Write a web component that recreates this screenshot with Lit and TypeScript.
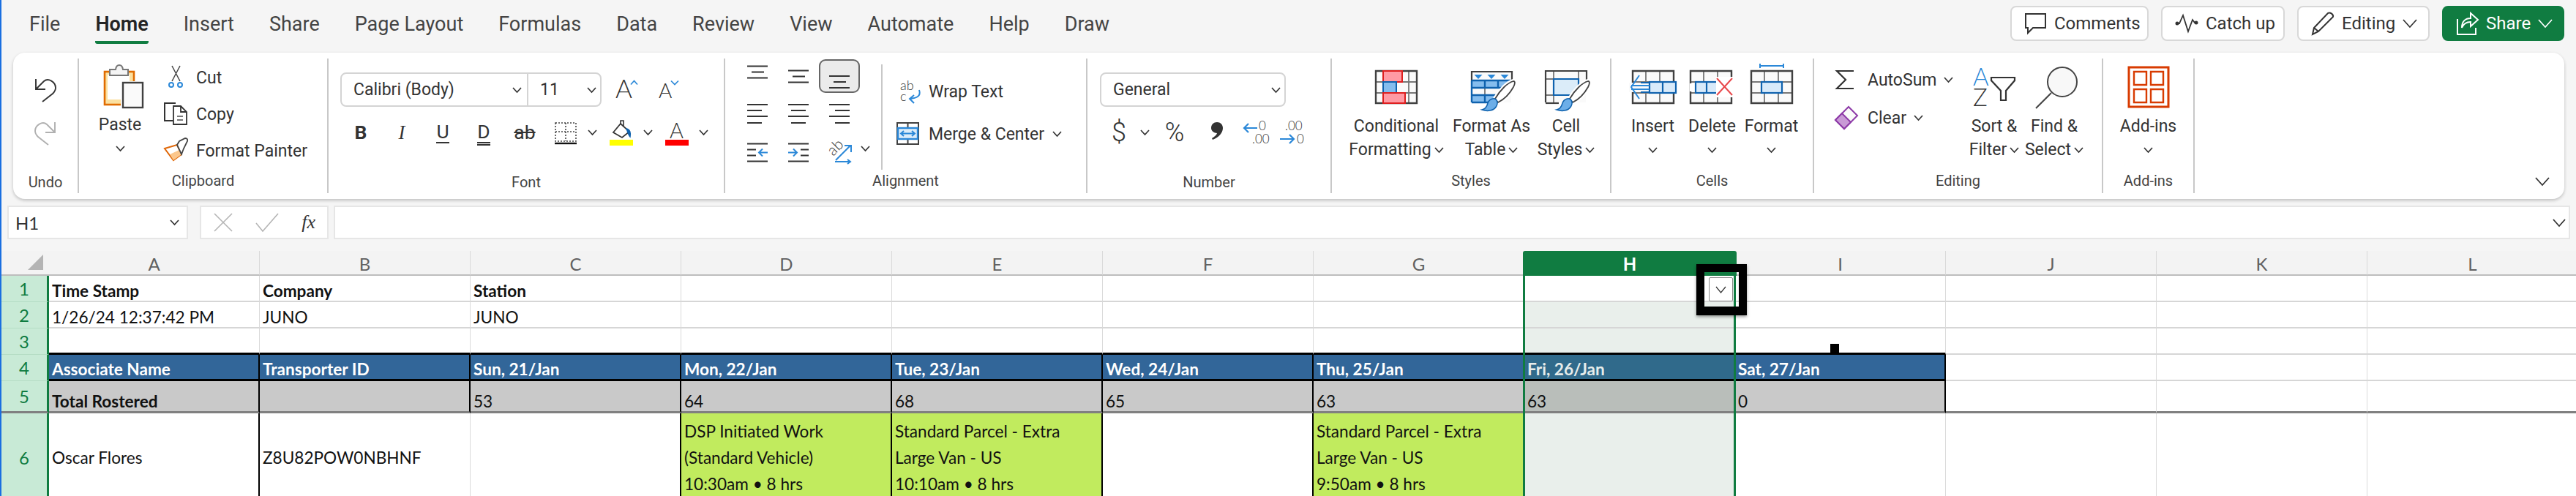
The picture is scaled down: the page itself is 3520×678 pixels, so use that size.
import { LitElement, html, svg, css } from "lit";
import { customElement } from "lit/decorators.js";

const chev = (w = 11, h = 6, c = "#333", sw = 1.7) => html`<svg class="chev" width=${w + 2} height=${h + 2} viewBox="0 0 ${w + 2} ${h + 2}"><path d="M1 1 L${(w + 2) / 2} ${h + 1} L${w + 1} 1" fill="none" stroke=${c} stroke-width=${sw}/></svg>`;

const lines = (rows: number[][], extra: unknown = "") => html`<svg width="32" height="36" viewBox="0 0 32 36"><path d="${rows.map((r) => `M${r[0]} ${r[2]}H${r[1]}`).join("")}" stroke="#333" stroke-width="2" fill="none"/>${extra}</svg>`;

const brush = () => svg`<path d="M37 39C44 27 54 17 62 15C65 15 64 19 62 23C57 32 49 40 41 44Z" fill="#fff" stroke="#fff" stroke-width="6"/><path d="M37 39C44 27 54 17 62 15C65 15 64 19 62 23C57 32 49 40 41 44Z" fill="#fff" stroke="#444" stroke-width="1.800"/><path d="M19 54C24 53 26 49 27 45C29 39 36 37 39 41C42 46 38 54 30 55C26 56 22 55 19 54Z" fill="#6caee8" stroke="#0f62ae" stroke-width="1.500"/>`;

@customElement("app-root")
export class AppRoot extends LitElement {
  static styles = css`
    :host { display: block; width: 3520px; height: 678px; overflow: hidden; background: #f5f5f5; border-left: 2px solid #1a6fe0; box-sizing: border-box; font-family: "Roboto", "Noto Sans", sans-serif; color: #333; }
    svg { display: block; flex: none; overflow: visible; }
    .top { display: flex; justify-content: space-between; height: 72px; padding-right: 16px; }
    .tabs { display: flex; gap: 48px; padding-left: 38px; }
    .tab { height: 60px; padding-top: 10px; line-height: 46px; font-size: 27px; color: #444; box-sizing: border-box; border-bottom: 4px solid transparent; }
    .tab.on { color: #242424; font-weight: 600; border-bottom-color: #107c41; border-radius: 0 0 3px 3px; }
    .acts { display: flex; gap: 17px; padding-top: 8px; }
    .act { height: 48px; box-sizing: border-box; border: 2px solid #d8d8d8; border-radius: 8px; background: #fff; display: flex; align-items: center; gap: 10px; font-size: 24px; color: #333; }
    .a1 { width: 189px; padding-left: 18px; }
    .a2 { width: 169px; padding-left: 17px; }
    .a3 { width: 181px; padding-left: 17px; }
    .a4 { width: 167px; padding-left: 18px; background: #107c41; border-color: #107c41; color: #fff; }
    .ribbon { display: flex; height: 200px; margin: 0 16px; box-sizing: border-box; padding: 8px 0; background: #fff; border-radius: 16px; box-shadow: 0 2px 4px rgba(0,0,0,.22); font-size: 23px; }
    .g { position: relative; box-sizing: border-box; border-right: 2px solid #c8c8c8; height: 184px; flex: none; display: flex; flex-direction: column; }
    .body { height: 152px; display: flex; }
    .lab { height: 32px; line-height: 30px; text-align: center; font-size: 20px; color: #444; }
    .g1 { width: 90px; } .g2 { width: 341px; } .g3 { width: 542px; } .g4 { width: 495px; } .g5 { width: 334px; } .g6 { width: 382px; } .g7 { width: 277px; } .g8 { width: 395px; } .g9 { width: 125px; }
    .undo { flex-direction: column; align-items: center; gap: 25px; padding-top: 27px; }
    .pastecol { margin-left: 24px; width: 64px; display: flex; flex-direction: column; align-items: center; padding-top: 6px; }
    .pastecol .t { line-height: 30px; margin-top: 8px; }
    .pastecol .chev { margin-top: 13px; }
    .clip { margin-left: 28px; display: flex; flex-direction: column; padding-top: 1px; }
    .rowi { height: 52px; display: flex; align-items: center; }
    .ic { width: 44px; display: flex; flex: none; }
    .fontcol { padding: 19px 0 0 16px; display: flex; flex-direction: column; }
    .f1 { display: flex; align-items: center; height: 47px; }
    .dd { box-sizing: border-box; height: 47px; border: 2px solid #d4d4d4; border-radius: 8px; display: flex; align-items: center; font-size: 23px; }
    .dd1 { width: 357px; }
    .ddn { width: 255px; border-right: 2px solid #d4d4d4; height: 100%; display: flex; align-items: center; justify-content: space-between; padding: 0 7px 0 16px; box-sizing: border-box; }
    .dds { flex: 1; display: flex; align-items: center; justify-content: space-between; padding: 0 5px 0 16px; }
    .grow { margin-left: 19px; display: flex; gap: 22px; }
    .f2 { display: flex; align-items: center; height: 50px; margin-top: 10px; }
    .b { width: 56px; text-align: center; font-size: 26.500px; color: #333; line-height: 40px; display: flex; justify-content: center; flex: none; }
    .b span { display: block; }
    .m4 { margin-left: 4px; }
    .bold { font-weight: 700; color: #333; }
    .ital { font-style: italic; font-family: "Liberation Serif", serif; }
    .und { border-bottom: 2px solid #333; line-height: 28px; }
    .dbl { border-bottom: 5px double #333; line-height: 28px; padding-top: 2px; }
    .strike { text-decoration: line-through; }
    .cv { width: 16px; display: flex; justify-content: center; flex: none; }
    .alg { display: grid; grid-template-columns: repeat(3, 56px); grid-template-rows: 47px 52px 47px; padding: 0 0 0 16px; }
    .alc { display: flex; align-items: center; justify-content: center; box-sizing: border-box; }
    .alc.on { background: #ebebeb; border: 2px solid #666; border-radius: 9px; height: 46px; margin-top: 1px; }
    .alc.last { justify-content: flex-start; padding-left: 12px; gap: 11px; }
    .wrap { margin: 8px 0 0 29px; height: 136px; border-left: 2px solid #c8c8c8; padding: 8px 0 0 20px; display: flex; flex-direction: column; }
    .wrow { height: 58px; display: flex; align-items: center; gap: 11px; }
    .numcol { padding: 19px 0 0 17px; display: flex; flex-direction: column; }
    .dd2 { width: 254px; justify-content: space-between; padding: 0 5px 0 16px; }
    .n2 { display: flex; align-items: center; height: 50px; margin-top: 10px; font-size: 36px; font-weight: 300; color: #333; }
    .n2 > div { display: flex; justify-content: center; flex: none; }
    .nd { width: 52px; } .nc { width: 18px; } .np { width: 64px; } .nm { width: 52px; } .ni { width: 54px; } .nj { width: 46px; }
    .cols { padding-left: 16px; }
    .col { display: flex; flex-direction: column; align-items: center; flex: none; }
    .ico { height: 77px; display: flex; align-items: flex-start; padding-top: 16px; box-sizing: border-box; }
    .up10 { margin-top: -10px; } .up8 { margin-top: -8px; } .up7 { margin-top: -7px; } .up6 { margin-top: -6px; } .up4 { margin-top: -4px; }
    .ln { height: 32px; line-height: 32px; display: flex; align-items: center; gap: 4px; white-space: nowrap; }
    .c1 { width: 144px; } .c2 { width: 116px; } .c3 { width: 88px; } .c4 { width: 81px; } .c5 { width: 82px; } .c6 { width: 123px; }
    .edit { padding-left: 28px; }
    .edl { width: 177px; padding-top: 3px; }
    .edl .rowi { gap: 0; }
    .edl .ic { width: 45px; }
    .edl .chev { margin-left: 10px; }
    .coll { flex: 1; display: flex; justify-content: flex-end; align-items: flex-end; padding: 0 20px 10px 0; }
    .fbar { display: flex; gap: 16px; padding: 9px 8px 16px; height: 71px; box-sizing: border-box; }
    .box { background: #fff; border: 2px solid #e6e6e6; box-sizing: border-box; height: 46px; display: flex; align-items: center; font-size: 24px; }
    .nm-box { width: 247px; justify-content: space-between; padding: 0 10px 0 9px; font-family: Lato, sans-serif; }
    .fn { width: 176px; margin-right: -9px; justify-content: space-between; padding: 0 16px 0 17px; }
    .fx { font-family: "Liberation Serif", serif; font-style: italic; font-size: 26px; }
    .fi { flex: 1; justify-content: flex-end; padding-right: 4px; }
    .sheet { position: relative; display: grid; grid-template-columns: 65px repeat(12, 288px); grid-template-rows: 34px 36px 36px 36px 36px 44px 122px; font-family: Lato, sans-serif; font-size: 22.600px; color: #111; }
    .corner { background: #f3f3f3; border-bottom: 2px solid #bdbdbd; }
    .ch { background: #f3f3f3; border-right: 1px solid #d9d9d9; border-bottom: 2px solid #bdbdbd; text-align: center; line-height: 36px; color: #616161; font-size: 24px; box-sizing: border-box; }
    .ch.on { background: #107c41; color: #fff; font-weight: 700; margin: 0 -2px; border: 0; border-radius: 3px 3px 0 0; position: relative; z-index: 1; }
    .rh { background: #c8ead6; color: #107c41; border-right: 3px solid #107c41; border-bottom: 1px solid #b4dcc4; text-align: center; font-size: 24px; display: flex; align-items: center; justify-content: center; box-sizing: border-box; }
    .c { box-sizing: border-box; background: #fff; border-right: 1px solid #dadada; border-bottom: 2px solid #d6d6d6; padding: 0 4px; display: flex; align-items: flex-end; white-space: nowrap; line-height: 27px; }
    .bb { border-bottom: 3px solid #000; }
    .hd { background: #326699; color: #fff; font-weight: 700; border-right: 2px solid #000; border-bottom: 3px solid #000; }
    .tot { background: #c9c9c9; border-right: 2px solid #000; padding-bottom: 0; }
    .gb { border-bottom: 3px solid #808080; }
    .br { border-right: 2px solid #000; }
    .gr { background: #c1eb5e; white-space: normal; align-items: flex-start; padding-top: 7px; line-height: 36px; }
    .mid { align-items: center; }
    .b7 { font-weight: 700; }
    .sel { background: #e9efeb; }
    .sel.first { background: #fff; }
    .sel.hd { background: #306a8b; color: #e6ecea; }
    .sel.tot { background: #b9beba; }
    .selL, .selR { position: absolute; top: 34px; bottom: 0; width: 3px; background: #107c41; }
    .selL { left: 2079px; } .selR { left: 2367px; }
    .filter { position: absolute; left: 2316px; top: 18px; width: 69px; height: 70px; box-sizing: border-box; border: solid #000; border-width: 11px 11px 12px; box-shadow: 0 2px 4px rgba(0,0,0,.4); z-index: 3; }
    .fbtn { position: absolute; left: 6px; top: 7px; width: 33px; height: 33px; box-sizing: border-box; background: #fff; border: 1px solid #8a8a8a; border-radius: 2px; display: flex; align-items: center; justify-content: center; }
    .dot { position: absolute; left: 2499px; top: 127px; width: 12px; height: 12px; background: #000; z-index: 3; }
    .thin { font-family: Lato, sans-serif; font-weight: 300; fill: #333; }
    .blue { fill: #2b88d8; }
  `;

  private sheet() {
    const cols = "ABCDEFGHIJKL".split("");
    const data: Record<string, string[]> = {
      1: ["Time Stamp", "Company", "Station"],
      2: ["1/26/24 12:37:42 PM", "JUNO", "JUNO"],
      3: [],
      4: ["Associate Name", "Transporter ID", "Sun, 21/Jan", "Mon, 22/Jan", "Tue, 23/Jan", "Wed, 24/Jan", "Thu, 25/Jan", "Fri, 26/Jan", "Sat, 27/Jan"],
      5: ["Total Rostered", "", "53", "64", "68", "65", "63", "63", "0"],
      6: ["Oscar Flores", "Z8U82POW0NBHNF"],
    };
    const six: Record<number, string[]> = {
      3: ["DSP Initiated Work", "(Standard Vehicle)", "10:30am • 8 hrs"],
      4: ["Standard Parcel - Extra", "Large Van - US", "10:10am • 8 hrs"],
      6: ["Standard Parcel - Extra", "Large Van - US", "9:50am • 8 hrs"],
    };
    const cellClass = (r: number, i: number) => {
      const k = ["c"];
      if (r === 3 && i <= 8) k.push("bb");
      if (r === 4 && i <= 8) k.push("hd");
      if (r === 5 && i <= 8) k.push("tot");
      if (r === 5) k.push("gb");
      if (r === 6 && [0, 2, 3, 4, 5].includes(i)) k.push("br");
      if (r === 6 && i in six) k.push("gr");
      if (r === 6 && i < 2) k.push("mid");
      if (r === 1 || (r === 5 && i === 0)) k.push("b7");
      if (i === 7) k.push("sel");
      if (i === 7 && r === 1) k.push("first");
      return k.join(" ");
    };
    return html`<div class="sheet">
      <div class="corner"><svg width="65" height="32" viewBox="0 0 65 32"><path d="M36 26 L57 26 L57 5Z" fill="#b4b4b4"/></svg></div>
      ${cols.map((c) => html`<div class="ch ${c === "H" ? "on" : ""}">${c}</div>`)}
      ${[1, 2, 3, 4, 5, 6].map(
        (r) => html`<div class="rh ${r === 5 ? "gb" : ""}">${r}</div>
          ${cols.map((_, i) => html`<div class=${cellClass(r, i)}>${r === 6 && six[i] ? html`<div>${six[i].map((l) => html`<div>${l}</div>`)}</div>` : data[r][i] ?? ""}</div>`)}`
      )}
      <div class="selL"></div><div class="selR"></div>
      <div class="filter"><div class="fbtn">${chev(13, 8, "#333", 1.2)}</div></div>
      <div class="dot"></div>
    </div>`;
  }

  private gridIcon(kind: string) {
    const frame = svg`<path d="M2 2H56V44H2Z" fill="#fafafa"/><path d="M2 16H56 M2 31H56 M19 2V44 M38 2V44" fill="none" stroke="#777" stroke-width="1.800"/><path d="M1 1H57V45H1Z" fill="none" stroke="#404040" stroke-width="2.400"/>`;
    if (kind === "cf")
      return html`<svg width="58" height="46" viewBox="0 0 58 46"><path d="M2 2H56V44H2Z" fill="#fafafa"/><path d="M2 16H56 M2 31H56 M46 2V44" fill="none" stroke="#777" stroke-width="1.800"/><path d="M1 1H57V45H1Z" fill="none" stroke="#404040" stroke-width="2.400"/><rect x="11" y="1" width="26" height="15" fill="#ff9aa4" stroke="#de1f1f" stroke-width="2"/><rect x="11" y="16" width="18" height="15" fill="#85bdee" stroke="#0f62ae" stroke-width="2"/><rect x="11" y="31" width="30" height="14" fill="#ff9aa4" stroke="#de1f1f" stroke-width="2"/></svg>`;
    if (kind === "fat")
      return html`<svg width="64" height="56" viewBox="0 0 64 56"><path d="M5 2H59V44H5Z" fill="#fafafa"/><path d="M5 14V2H60V16" fill="none" stroke="#404040" stroke-width="2.200"/><path d="M8.500 6h11l-5.500 6Z M26.500 6h11l-5.500 6Z M44.500 6h11l-5.500 6Z" fill="#2b88d8"/><rect x="5" y="14" width="53" height="10" fill="#85bdee"/><rect x="5" y="34" width="30" height="10" fill="#85bdee"/><path d="M23 24V34" stroke="#777" stroke-width="1.800"/><path d="M5 14H58 M5 24H52 M5 34H45 M5 44H34 M5 14V44 M23 14V24 M41 14V24 M23 34V44" fill="none" stroke="#0f62ae" stroke-width="2.400"/>${brush()}</svg>`;
    if (kind === "cs")
      return html`<svg width="64" height="56" viewBox="0 0 64 56"><path d="M5 2H59V44H5Z" fill="#fafafa"/><path d="M5 12H15 M5 34H15 M15 2V44 M49 2V12" fill="none" stroke="#777" stroke-width="1.800"/><path d="M4 44V1H60V18" fill="none" stroke="#404040" stroke-width="2.200"/><path d="M4 45H22" stroke="#404040" stroke-width="2.200"/><path d="M15 12H49V34H15Z" fill="#dbecf9" stroke="#0f62ae" stroke-width="2.200"/>${brush()}</svg>`;
    if (kind === "ins")
      return html`<svg width="66" height="46" viewBox="0 0 66 46"><g transform="translate(4 0)">${frame}</g><rect x="0" y="17" width="28" height="13" fill="#fafafa"/><rect x="28" y="16" width="36" height="15" fill="#d8eafa" stroke="#0f62ae" stroke-width="2.200"/><path d="M46 16V31" stroke="#0f62ae" stroke-width="2.200"/><path d="M16 17H28 M16 30H28" stroke="#0f62ae" stroke-width="2.200"/><path d="M14 7L3 23L14 39 M3 21H28 M3 26H28" fill="none" stroke="#2b88d8" stroke-width="2"/></svg>`;
    if (kind === "del")
      return html`<svg width="62" height="46" viewBox="0 0 62 46">${frame}<rect x="0" y="18" width="8" height="11" fill="#fff"/><rect x="8" y="16" width="30" height="15" fill="#d8eafa" stroke="#0f62ae" stroke-width="2.200"/><path d="M23 16V31" stroke="#0f62ae" stroke-width="2.200"/><rect x="36" y="9" width="24" height="28" fill="#fff"/><path d="M37 11L58 34M58 11L37 34" stroke="#e8474a" stroke-width="2" fill="none"/></svg>`;
    return html`<svg class="up10" width="60" height="56" viewBox="0 0 60 56"><g transform="translate(1 10)">${frame}<rect x="15" y="16" width="28" height="15" fill="#d8eafa" stroke="#0f62ae" stroke-width="2.200"/></g><path d="M14 1V7 M14 4H46 M46 1V7" stroke="#2b88d8" stroke-width="2"/></svg>`;
  }

  render() {
    return html`
      <div class="top">
        <div class="tabs">
          ${["File", "Home", "Insert", "Share", "Page Layout", "Formulas", "Data", "Review", "View", "Automate", "Help", "Draw"].map(
            (t) => html`<div class="tab ${t === "Home" ? "on" : ""}">${t}</div>`
          )}
        </div>
        <div class="acts">
          <div class="act a1"><svg width="30" height="30" viewBox="0 0 30 30"><path d="M1 2H28V21H11L4 28V21H1Z" fill="none" stroke="#333" stroke-width="2"/></svg>Comments</div>
          <div class="act a2"><svg width="32" height="26" viewBox="0 0 32 26"><path d="M1 13H6L11 2L18 24L24 8L27 12H31" fill="none" stroke="#333" stroke-width="1.800"/><circle cx="3" cy="13" r="2.500" fill="#333"/><circle cx="29" cy="12" r="2.500" fill="#333"/></svg>Catch up</div>
          <div class="act a3"><svg width="32" height="32" viewBox="0 0 32 32"><path d="M2 31L4 22L23 2C26 0 31 4 30 7L10 27Z M4 22L10 27" fill="none" stroke="#333" stroke-width="2"/></svg>Editing${chev(18, 10, "#333", 1.7)}</div>
          <div class="act a4"><svg width="30" height="32" viewBox="0 0 30 32"><path d="M1 10V31H26V22" fill="none" stroke="#fff" stroke-width="2"/><path d="M7 22C7 13 12 9 19 9V2L29 11L19 20V14C13 14 9 17 7 22Z" fill="none" stroke="#fff" stroke-width="2"/></svg>Share${chev(18, 10, "#fff", 1.7)}</div>
        </div>
      </div>

      <div class="ribbon">
        <section class="g g1">
          <div class="body undo">
            <svg width="32" height="34" viewBox="0 0 32 34"><path d="M3 1V15H16 M3 15L14 4C20 -1 30 5 30 13C30 17 28 19 26 21L12 32" fill="none" stroke="#333" stroke-width="1.900"/></svg>
            <svg width="32" height="34" viewBox="0 0 32 34"><path d="M29 1V15H16 M29 15L18 4C12 -1 2 5 2 13C2 17 4 19 6 21L20 32" fill="none" stroke="#b0b0b0" stroke-width="1.900"/></svg>
          </div>
          <div class="lab">Undo</div>
        </section>

        <section class="g g2">
          <div class="body">
            <div class="pastecol">
              <svg width="64" height="62" viewBox="0 0 64 62"><rect x="11" y="12" width="40" height="45" fill="#fbe0a0" stroke="#e06c00" stroke-width="2.600"/><rect x="15" y="16" width="30" height="34" fill="#fff"/><path d="M18 17V9H26C27 1 35 1 36 9H43V17Z" fill="#f5f5f5" stroke="#777" stroke-width="2"/><rect x="33" y="25" width="33" height="38" fill="#fff"/><rect x="36" y="27" width="27" height="34" fill="#fafafa" stroke="#404040" stroke-width="2.400"/></svg>
              <div class="t">Paste</div>
              ${chev()}
            </div>
            <div class="clip">
              <div class="rowi"><div class="ic"><svg width="32" height="32" viewBox="0 0 32 32"><path d="M11 0L22 21 M22 0L11 21" stroke="#444" stroke-width="1.500" fill="none"/><circle cx="10" cy="26" r="3" fill="none" stroke="#2b88d8" stroke-width="2"/><circle cx="22" cy="26" r="3" fill="none" stroke="#2b88d8" stroke-width="2"/></svg></div>Cut</div>
              <div class="rowi"><div class="ic"><svg width="32" height="32" viewBox="0 0 32 32"><path d="M16 1H1V25H12" fill="none" stroke="#333" stroke-width="2"/><path d="M13 5H23L31 13V30H13Z M23 5V13H31" fill="#fff" stroke="#333" stroke-width="1.800"/><path d="M18 19H26 M18 24H26" stroke="#777" stroke-width="1.800"/></svg></div>Copy</div>
              <div class="rowi"><div class="ic"><svg width="32" height="36" viewBox="0 0 32 36"><path d="M1 14L18 9L24 22L13 30Z" fill="#fff" stroke="#e0690b" stroke-width="2"/><path d="M8 22L21 16L24 22L13 30Z" fill="#fbc78d"/><path d="M18 9L21 4L29 0Q33 0 32 4L27 14L24 22Z" fill="#fff" stroke="#444" stroke-width="1.800"/></svg></div>Format Painter</div>
            </div>
          </div>
          <div class="lab">Clipboard</div>
        </section>

        <section class="g g3">
          <div class="body fontcol">
            <div class="f1">
              <div class="dd dd1"><div class="ddn">Calibri (Body)${chev()}</div><div class="dds">11${chev()}</div></div>
              <div class="grow">
                <svg width="34" height="36" viewBox="0 0 34 36"><text x="0" y="28.500" font-size="35" class="thin">A</text><path d="M21 10.500L25.500 5.500L30 10.500" fill="none" stroke="#2b88d8" stroke-width="1.700"/></svg>
                <svg width="34" height="36" viewBox="0 0 34 36"><text x="3" y="28.500" font-size="28" class="thin">A</text><path d="M20 5.500L25 10.500L30 5.500" fill="none" stroke="#2b88d8" stroke-width="1.700"/></svg>
              </div>
            </div>
            <div class="f2">
              <div class="b bold"><span>B</span></div>
              <div class="b ital"><span>I</span></div>
              <div class="b"><span class="und">U</span></div>
              <div class="b"><span class="dbl">D</span></div>
              <div class="b"><span class="strike">ab</span></div>
              <div class="b"><svg width="32" height="32" viewBox="0 0 32 32"><path d="M2 3H30V28H2Z M16 3V28 M2 15H30" fill="none" stroke="#444" stroke-width="1.600" stroke-dasharray="2 2"/><path d="M1 31H31" stroke="#111" stroke-width="2.400"/></svg></div>
              <div class="cv">${chev()}</div>
              <div class="b m4"><svg width="32" height="36" viewBox="0 0 32 36"><path d="M5 18L15 6L27 17L17 25Z" fill="#fff" stroke="#333" stroke-width="1.800"/><path d="M15 6V2H19V10" fill="none" stroke="#333" stroke-width="1.600"/><path d="M23 13C28 14 29 19 28 24C26 22 25 18 23 13Z" fill="#0f62ae" stroke="#0f62ae" stroke-width="1.500"/><rect y="28" width="32" height="8" x="0" fill="#ffff00"/></svg></div>
              <div class="cv">${chev()}</div>
              <div class="b m4"><svg width="32" height="36" viewBox="0 0 32 36"><text x="6" y="26" font-size="29" class="thin">A</text><rect y="28" width="32" height="8" fill="#f00"/></svg></div>
              <div class="cv">${chev()}</div>
            </div>
          </div>
          <div class="lab">Font</div>
        </section>

        <section class="g g4">
          <div class="body">
            <div class="alg">
              <div class="alc">${lines([[2, 30, 4.5], [8, 25, 12.5], [2, 30, 20.5]])}</div>
              <div class="alc">${lines([[2, 30, 10.5], [8, 25, 18.5], [2, 30, 26.5]])}</div>
              <div class="alc on">${lines([[2, 30, 18], [8, 25, 26], [2, 30, 34]])}</div>
              <div class="alc">${lines([[2, 30, 8], [2, 22, 16], [2, 30, 24], [2, 22, 33]])}</div>
              <div class="alc">${lines([[2, 30, 8], [6, 26, 16], [2, 30, 24], [6, 26, 33]])}</div>
              <div class="alc">${lines([[2, 30, 8], [10, 30, 16], [2, 30, 24], [10, 30, 33]])}</div>
              <div class="alc">${lines([[2, 30, 11.5], [2, 14, 19.5], [2, 14, 27.5], [2, 30, 35.5]], svg`<path d="M30 23.500H18 M23 18.500L18 23.500L23 28.500" stroke="#2b88d8" stroke-width="2" fill="none"/>`)}</div>
              <div class="alc">${lines([[2, 30, 11.5], [19, 30, 19.5], [19, 30, 27.5], [2, 30, 35.5]], svg`<path d="M2 23.500H14 M9 18.500L14 23.500L9 28.500" stroke="#2b88d8" stroke-width="2" fill="none"/>`)}</div>
              <div class="alc last"><svg width="34" height="38" viewBox="0 0 34 38"><text x="11" y="24" font-size="21" text-anchor="middle" class="thin" transform="rotate(-45 11 18)">ab</text><path d="M11 35L31 15 M23 15H32V24 M10 37H30 M27 34L31 37L27 40" fill="none" stroke="#2b88d8" stroke-width="2"/></svg>${chev()}</div>
            </div>
            <div class="wrap">
              <div class="wrow"><svg width="32" height="34" viewBox="0 0 32 34"><text x="4" y="15" font-size="18" class="thin">ab</text><text x="4" y="30" font-size="18" class="thin">c</text><path d="M30 15C33 24 26 26 17 27 M23 22L17 27L23 33" fill="none" stroke="#2b88d8" stroke-width="2"/></svg>Wrap Text</div>
              <div class="wrow"><svg width="32" height="32" viewBox="0 0 32 32"><path d="M0 1H29V30H0Z M14.500 1V8 M14.500 23V30" fill="none" stroke="#404040" stroke-width="2"/><rect x="1" y="8" width="27" height="15" fill="#dbecf9" stroke="#2b88d8" stroke-width="2.400"/><path d="M5 15.500H24 M9 12L5 15.500L9 19 M20 12L24 15.500L20 19" fill="none" stroke="#2b88d8" stroke-width="2"/></svg>Merge &amp; Center${chev()}</div>
            </div>
          </div>
          <div class="lab">Alignment</div>
        </section>

        <section class="g g5">
          <div class="body numcol">
            <div class="dd dd2">General${chev()}</div>
            <div class="n2">
              <div class="nd">$</div>
              <div class="nc">${chev()}</div>
              <div class="np">%</div>
              <div class="nm"><svg width="16" height="24" viewBox="0 0 16 24" class="up4"><path d="M8 0C12.500 0 16 3 16 8C16 15 10 21 2 24L1 22C5 20 7.500 17 8 15C4 15 0 12 0 8C0 3 3.500 0 8 0Z" fill="#333"/></svg></div>
              <div class="ni"><svg width="36" height="34" viewBox="0 0 36 34"><text x="22" y="14" font-size="17" class="thin">0</text><text x="13" y="32" font-size="17" class="thin">.00</text><path d="M20 11H2 M8 5L2 11L8 17" fill="none" stroke="#2b88d8" stroke-width="2.200"/></svg></div>
              <div class="nj"><svg width="36" height="34" viewBox="0 0 36 34"><text x="8" y="14" font-size="17" class="thin">.00</text><text x="24" y="32" font-size="17" class="thin">0</text><path d="M1 26H20 M14 20L20 26L14 32" fill="none" stroke="#2b88d8" stroke-width="2.200"/></svg></div>
            </div>
          </div>
          <div class="lab">Number</div>
        </section>

        <section class="g g6">
          <div class="body cols">
            <div class="col c1"><div class="ico">${this.gridIcon("cf")}</div><div class="ln">Conditional</div><div class="ln">Formatting${chev()}</div></div>
            <div class="col c2"><div class="ico">${this.gridIcon("fat")}</div><div class="ln">Format As</div><div class="ln">Table${chev()}</div></div>
            <div class="col c3"><div class="ico">${this.gridIcon("cs")}</div><div class="ln">Cell</div><div class="ln">Styles${chev()}</div></div>
          </div>
          <div class="lab">Styles</div>
        </section>

        <section class="g g7">
          <div class="body cols">
            <div class="col c4"><div class="ico">${this.gridIcon("ins")}</div><div class="ln">Insert</div><div class="ln">${chev()}</div></div>
            <div class="col c4"><div class="ico">${this.gridIcon("del")}</div><div class="ln">Delete</div><div class="ln">${chev()}</div></div>
            <div class="col c4"><div class="ico">${this.gridIcon("fmt")}</div><div class="ln">Format</div><div class="ln">${chev()}</div></div>
          </div>
          <div class="lab">Cells</div>
        </section>

        <section class="g g8">
          <div class="body edit">
            <div class="edl">
              <div class="rowi"><div class="ic"><svg width="28" height="30" viewBox="0 0 28 30"><path d="M26 3H3L15 15L3 27H26" fill="none" stroke="#333" stroke-width="2.200"/></svg></div>AutoSum${chev()}</div>
              <div class="rowi"><div class="ic"><svg width="32" height="32" viewBox="0 0 32 32"><path d="M19 1L31 13L13 31L1 19Z" fill="#fafafa" stroke="#8e3ba8" stroke-width="2"/><path d="M10 10L22 22L13 31L1 19Z" fill="#c99ad6" stroke="#8e3ba8" stroke-width="2"/></svg></div>Clear${chev()}</div>
            </div>
            <div class="col c5"><div class="ico"><svg class="up8" width="64" height="60" viewBox="0 0 64 60"><text x="3" y="29" font-size="33" class="thin blue">A</text><text x="3" y="57" font-size="33" class="thin">Z</text><path d="M28 18H60V22L48 36V49H41V36L28 22Z" fill="none" stroke="#333" stroke-width="2.200"/></svg></div><div class="ln">Sort &amp;</div><div class="ln">Filter${chev()}</div></div>
            <div class="col c5"><div class="ico"><svg class="up7" width="64" height="62" viewBox="0 0 64 62"><circle cx="43" cy="23" r="20" fill="#f8f8f8" stroke="#444" stroke-width="2"/><path d="M28 38L7 59" stroke="#444" stroke-width="2"/></svg></div><div class="ln">Find &amp;</div><div class="ln">Select${chev()}</div></div>
          </div>
          <div class="lab">Editing</div>
        </section>

        <section class="g g9">
          <div class="body"><div class="col c6"><div class="ico"><svg class="up6" width="58" height="58" viewBox="0 0 58 58"><path d="M2 2H56V56H2Z" fill="#fff" stroke="#d83b01" stroke-width="3"/><path d="M9 8H26V26H9Z M32 8H49V26H32Z M9 32H26V50H9Z M32 32H49V50H32Z" fill="#fff" stroke="#d83b01" stroke-width="2.400"/></svg></div><div class="ln">Add-ins</div><div class="ln">${chev()}</div></div></div>
          <div class="lab">Add-ins</div>
        </section>
        <div class="coll">${chev(18, 10, "#333", 1.8)}</div>
      </div>

      <div class="fbar">
        <div class="box nm-box">H1${chev()}</div>
        <div class="box fn">
          <svg width="26" height="26" viewBox="0 0 26 26"><path d="M1 1L25 25M25 1L1 25" stroke="#b5b5b5" stroke-width="1.600"/></svg>
          <svg width="34" height="26" viewBox="0 0 34 26"><path d="M2 14L11 25L32 1" fill="none" stroke="#b5b5b5" stroke-width="1.600"/></svg>
          <span class="fx">fx</span>
        </div>
        <div class="box fi">${chev(16, 9, "#333", 1.8)}</div>
      </div>
      ${this.sheet()}
    `;
  }
}
